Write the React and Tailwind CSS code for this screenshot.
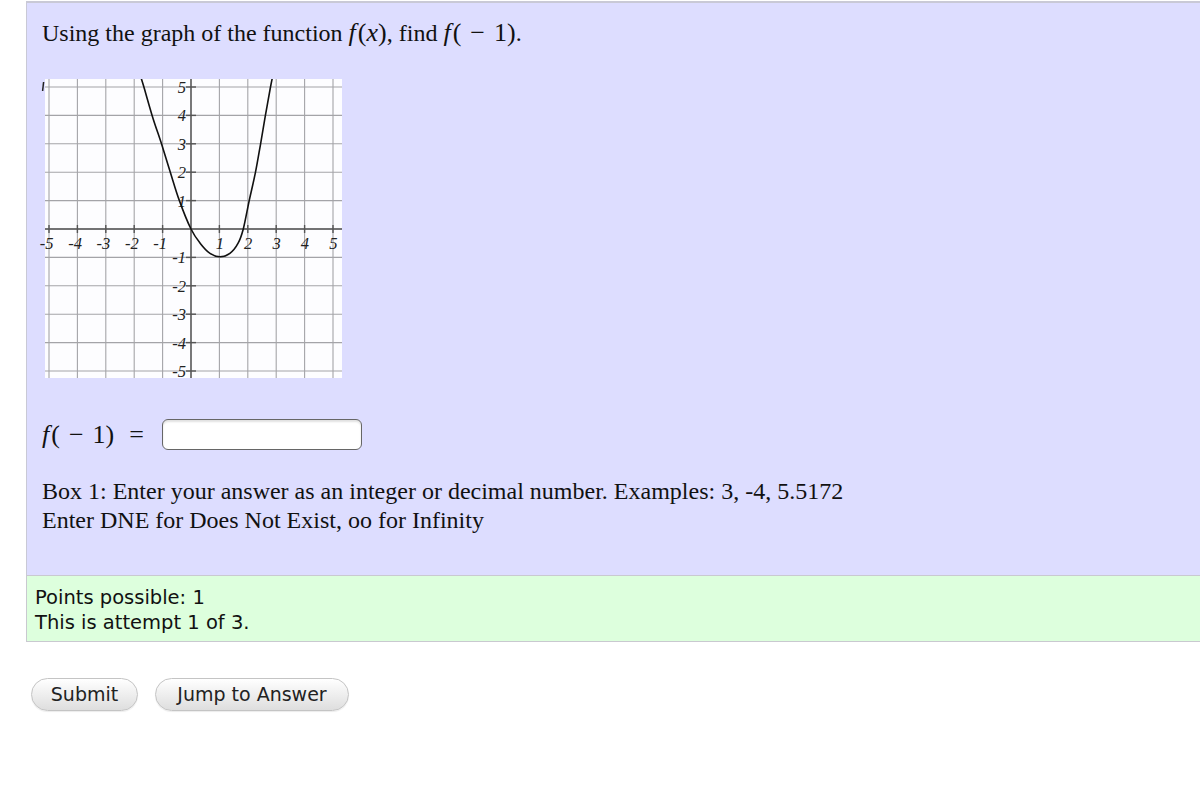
import React from 'react'

const OX = 149
const OY = 151
const U = 28.4
const sx = (x) => OX + U * x
const sy = (y) => OY - U * y

// hand-traced points of the curve (graph units)
const curvePts = [
  [-1.75, 5.3], [-1.66, 5], [-1.37, 4], [-1.04, 3], [-0.73, 2], [-0.41, 1], [0, 0],
  [0.32, -0.5], [0.67, -0.86], [1.02, -0.98], [1.37, -0.86], [1.66, -0.5], [1.84, 0],
  [2.05, 1], [2.27, 2], [2.45, 3], [2.62, 4], [2.8, 5], [2.86, 5.3],
]

function smoothPath(pts) {
  const p = pts.map(([x, y]) => [sx(x), sy(y)])
  let d = `M${p[0][0].toFixed(1)},${p[0][1].toFixed(1)}`
  for (let i = 0; i < p.length - 1; i++) {
    const p0 = p[i - 1] || p[i]
    const p1 = p[i]
    const p2 = p[i + 1]
    const p3 = p[i + 2] || p2
    const c1 = [p1[0] + (p2[0] - p0[0]) / 6, p1[1] + (p2[1] - p0[1]) / 6]
    const c2 = [p2[0] - (p3[0] - p1[0]) / 6, p2[1] - (p3[1] - p1[1]) / 6]
    d += ` C${c1[0].toFixed(1)},${c1[1].toFixed(1)} ${c2[0].toFixed(1)},${c2[1].toFixed(1)} ${p2[0].toFixed(1)},${p2[1].toFixed(1)}`
  }
  return d
}

const ticks = [-5, -4, -3, -2, -1, 1, 2, 3, 4, 5]
const grid = [-5, -4, -3, -2, -1, 0, 1, 2, 3, 4, 5]

function Graph() {
  return (
    <svg width="300" height="300" viewBox="0 0 300 300" className="block overflow-visible">
      <defs>
        <clipPath id="img">
          <rect x="3" y="1" width="297" height="299" />
        </clipPath>
      </defs>
      <rect x="3" y="1" width="297" height="299" fill="#fdfdff" />
      <g stroke="#a4a4a8" strokeWidth="1.1">
        {grid.map((v) => (
          <line key={'v' + v} x1={sx(v)} y1="1" x2={sx(v)} y2="300" />
        ))}
        {grid.map((v) => (
          <line key={'h' + v} x1="3" y1={sy(v)} x2="300" y2={sy(v)} />
        ))}
      </g>
      <g stroke="#555" strokeWidth="1.4">
        <line x1="3" y1={OY} x2="300" y2={OY} />
        <line x1={OX} y1="1" x2={OX} y2="300" />
        {ticks.map((v) => (
          <line key={'tx' + v} x1={sx(v)} y1={OY - 4} x2={sx(v)} y2={OY + 4} />
        ))}
        {ticks.map((v) => (
          <line key={'ty' + v} x1={OX - 5} y1={sy(v)} x2={OX + 5} y2={sy(v)} />
        ))}
      </g>
      <g fill="#222" fontFamily="'Liberation Serif', serif" fontStyle="italic" fontSize="16.5">
        {ticks.map((v) => (
          <text key={'lx' + v} x={sx(v) + 4.5} y={OY + 20} textAnchor="end">
            {v}
          </text>
        ))}
        {ticks.map((v) => (
          <text key={'ly' + v} x={OX - 5} y={sy(v) + 6} textAnchor="end">
            {v}
          </text>
        ))}
      </g>
      <path d={smoothPath(curvePts)} fill="none" stroke="#111" strokeWidth="1.6" clipPath="url(#img)" />
      <line x1="1.6" y1="4" x2="0.6" y2="13" stroke="#222" strokeWidth="1.5" />
    </svg>
  )
}

// MathJax-like inline math piece
function M({ children }) {
  return <span className="text-[26px]">{children}</span>
}

export default function App() {
  return (
    <div className="bg-white min-h-[807px] pt-px" style={{ fontFamily: "'Liberation Serif', serif" }}>
      {/* question box */}
      <div className="ml-[26px] border-l border-t-2 border-[#c9c9d6] bg-[#ddddff] pl-[15px] pt-[16px] pb-[40px] text-[#111]">
        <div className="text-[24px] leading-[28px]">
          Using the graph of the function{' '}
          <M>
            <i className="mr-[2px]">f</i>(<i>x</i>)
          </M>
          , find{' '}
          <M>
            <i className="mr-[2px]">f</i>(<span className="mx-[9px]">−</span>1)
          </M>
          .
        </div>

        <div className="mt-[31px]">
          <Graph />
        </div>

        <div className="mt-[41px] flex items-center h-[31px]">
          <span className="text-[26px] leading-[28px] w-[120px] whitespace-nowrap">
            <i className="mr-[2px]">f</i>(<span className="mx-[9px]">−</span>1)<span className="ml-[15px]">=</span>
          </span>
          <input
            type="text"
            className="w-[200px] h-[31px] bg-white border border-[#666] rounded-[6px] shadow-[inset_0_2px_2px_rgba(0,0,0,0.12)] outline-none px-2"
          />
        </div>

        <div className="mt-[27px] text-[24px] leading-[29px]">
          <div>Box 1: Enter your answer as an integer or decimal number. Examples: 3, -4, 5.5172</div>
          <div>Enter DNE for Does Not Exist, oo for Infinity</div>
        </div>
      </div>

      {/* points box */}
      <div
        className="ml-[26px] border-l border-t border-b border-[#c9c9d0] bg-[#ddffdd] pl-[8px] pt-[9px] pb-[6px] text-[19.5px] leading-[25px] text-[#111]"
        style={{ fontFamily: "'DejaVu Sans', Verdana, sans-serif" }}
      >
        <div>Points possible: 1</div>
        <div>This is attempt 1 of 3.</div>
      </div>

      {/* buttons */}
      <div className="ml-[31px] mt-[36px] flex gap-[17px]" style={{ fontFamily: "'DejaVu Sans', Verdana, sans-serif" }}>
        <button className="h-[33px] w-[107px] rounded-full border border-[#c4c4c4] bg-gradient-to-b from-white to-[#dedede] text-[19px] text-[#222] shadow-[0_1px_1px_rgba(0,0,0,0.08)]">
          Submit
        </button>
        <button className="h-[33px] w-[194px] rounded-full border border-[#c4c4c4] bg-gradient-to-b from-white to-[#dedede] text-[19px] text-[#222] shadow-[0_1px_1px_rgba(0,0,0,0.08)]">
          Jump to Answer
        </button>
      </div>
    </div>
  )
}
